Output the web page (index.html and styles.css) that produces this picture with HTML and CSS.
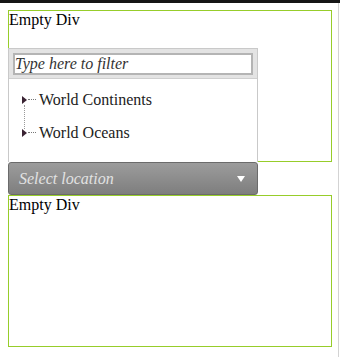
FILE: index.html
```html
<!DOCTYPE html>
<html>
<head>
<meta charset="utf-8">
<link rel="stylesheet" href="styles.css">
</head>
<body>
<div class="topbar"></div>
<div class="page">
  <div class="box">Empty Div</div>
  <div class="picker">
    <div class="popup">
      <div class="popup-head">
        <div class="filter">Type here to filter</div>
      </div>
      <ul class="tree">
        <li class="node first"><span class="toggle"></span><span class="dots"></span><span class="label">World Continents</span></li>
        <li class="node last"><span class="toggle"></span><span class="dots"></span><span class="label">World Oceans</span></li>
      </ul>
    </div>
    <div class="select">
      <span class="select-text">Select location</span>
      <span class="caret"></span>
    </div>
  </div>
  <div class="box">Empty Div</div>
</div>
<div class="edge"></div>
</body>
</html>
```

FILE: styles.css
```css
html, body {
  margin: 0;
  padding: 0;
  background: #fff;
}
body {
  font-family: "Liberation Serif", "Times New Roman", serif;
  font-size: 16px;
  color: #000;
  width: 340px;
  height: 357px;
  overflow: hidden;
  position: relative;
}
.topbar {
  height: 3px;
  background: #151515;
}
.page {
  padding: 7px 0 0 8px;
  width: 324px;
}
.box {
  border: 1px solid #97cd2a;
  height: 150px;
  line-height: 18px;
}
.picker {
  position: relative;
  width: 250px;
}
.popup {
  position: absolute;
  left: 0;
  bottom: 100%;
  width: 248px;
  height: 113px;
  border: 1px solid #c9c9c9;
  border-bottom: 0;
  background: #fff;
}
.popup-head {
  box-sizing: border-box;
  height: 30px;
  background: #e3e3e3;
  border-bottom: 1px solid #cfcfcf;
  display: flex;
  align-items: center;
  padding-left: 4px;
}
.filter {
  box-sizing: border-box;
  width: 240px;
  height: 22px;
  border: 2px solid #b4b4b4;
  background: #fff;
  font-style: italic;
  font-size: 16px;
  line-height: 18px;
  color: #333;
  padding-left: 0;
}
.tree {
  list-style: none;
  margin: 0;
  padding: 4px 0 0 13px;
}
.node {
  position: relative;
  display: flex;
  align-items: center;
  height: 33px;
  font-size: 16px;
  color: #222;
}
.toggle {
  width: 0;
  height: 0;
  border-top: 4px solid transparent;
  border-bottom: 4px solid transparent;
  border-left: 5px solid #3a2333;
}
.dots {
  width: 8px;
  margin-left: 1px;
  border-top: 1px dotted #777;
}
.label {
  margin-left: 3px;
}
.node.first::after {
  content: "";
  position: absolute;
  left: 2px;
  top: 22px;
  height: 24px;
  border-left: 1px dotted #999;
}
.select {
  box-sizing: border-box;
  height: 33px;
  width: 250px;
  border: 1px solid #6b6b6b;
  border-radius: 3px;
  background: linear-gradient(#9c9c9c, #7e7e7e);
  display: flex;
  align-items: center;
  justify-content: space-between;
  padding: 0 12px 0 10px;
}
.select-text {
  font-style: italic;
  font-size: 16px;
  color: #e2e2e2;
}
.caret {
  width: 0;
  height: 0;
  border-left: 4px solid transparent;
  border-right: 4px solid transparent;
  border-top: 6px solid #fff;
}
.edge {
  position: absolute;
  right: 1px;
  top: 3px;
  bottom: 0;
  width: 1px;
  background: #d3d3d3;
}
```
